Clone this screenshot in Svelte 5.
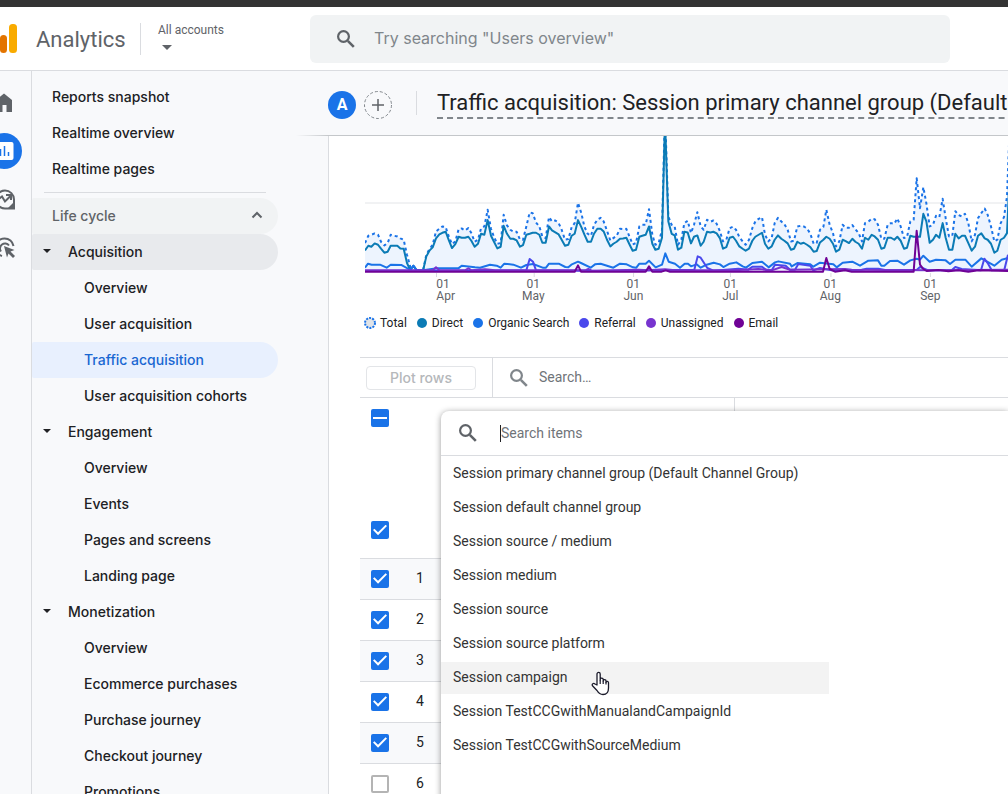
<script lang="ts">
  type Point = [number, number];
  type Series = { name: string; color: string; line: string };

  const topLinks = ['Reports snapshot', 'Realtime overview', 'Realtime pages'];

  const groups = [
    {
      name: 'Acquisition',
      items: ['Overview', 'User acquisition', 'Traffic acquisition', 'User acquisition cohorts'],
    },
    { name: 'Engagement', items: ['Overview', 'Events', 'Pages and screens', 'Landing page'] },
    {
      name: 'Monetization',
      items: ['Overview', 'Ecommerce purchases', 'Purchase journey', 'Checkout journey', 'Promotions'],
    },
  ];

  const dimensions = [
    'Session primary channel group (Default Channel Group)',
    'Session default channel group',
    'Session source / medium',
    'Session medium',
    'Session source',
    'Session source platform',
    'Session campaign',
    'Session TestCCGwithManualandCampaignId',
    'Session TestCCGwithSourceMedium',
  ];

  let active = $state('Traffic acquisition');
  let hovered = $state('Session campaign');
  let rows = $state([true, true, true, true, true, false]);
  let someRows = $state(true);
  let query = $state('');

  let shown = $derived(dimensions.filter((d) => d.toLowerCase().includes(query.toLowerCase())));

  // Plot units: one day is 9.68 wide, y grows downwards and 425 is zero
  const PLOT_WIDTH = 1929;
  const DAY = 9.68;

  const totalDaily = [
    340, 318, 315, 311, 315, 336, 347, 340, 315, 318, 320, 326, 330, 375, 412, 408, 422, 423, 423, 375,
    357, 345, 305, 297, 290, 292, 322, 343, 335, 298, 296, 302, 295, 310, 336, 330, 296, 290, 240, 297,
    322, 342, 340, 255, 287, 300, 306, 306, 330, 330, 290, 248, 250, 278, 290, 320, 325, 262, 275, 272,
    280, 300, 330, 328, 292, 280, 219, 250, 290, 312, 318, 285, 270, 264, 275, 303, 332, 325, 318, 297,
    298, 297, 322, 344, 340, 290, 285, 285, 238, 315, 345, 340, 300, -60, 260, 285, 290, 345, 330, 280,
    273, 310, 285, 247, 290, 300, 270, 276, 272, 282, 305, 335, 330, 295, 291, 300, 322, 335, 345, 330,
    295, 275, 267, 262, 315, 335, 325, 280, 264, 275, 283, 300, 335, 333, 290, 288, 290, 296, 312, 342,
    340, 300, 292, 240, 285, 310, 350, 335, 285, 294, 294, 286, 298, 310, 335, 280, 276, 267, 268, 285,
    327, 327, 285, 280, 282, 266, 290, 325, 322, 275, 270, 145, 235, 172, 220, 290, 285, 258, 262, 207,
    265, 320, 318, 244, 256, 260, 252, 280, 335, 315, 265, 250, 236, 255, 290, 335, 330, 280, 262, 200,
    -60,
  ];

  const directDaily = [
    362, 348, 351, 341, 345, 357, 369, 366, 348, 348, 348, 356, 357, 400, 422, 408, 422, 423, 423, 380,
    362, 353, 326, 314, 309, 306, 333, 355, 343, 321, 324, 324, 321, 333, 351, 342, 312, 315, 271, 318,
    336, 356, 351, 288, 312, 327, 327, 332, 351, 346, 315, 312, 309, 309, 315, 339, 339, 290, 302, 308,
    314, 330, 348, 345, 318, 312, 271, 292, 314, 336, 336, 312, 297, 297, 305, 330, 350, 342, 336, 327,
    326, 324, 345, 363, 360, 321, 318, 315, 290, 342, 360, 357, 324, -30, 275, 312, 317, 360, 354, 306,
    308, 341, 321, 317, 348, 336, 306, 308, 306, 311, 326, 357, 352, 324, 321, 333, 350, 357, 363, 357,
    333, 321, 315, 309, 342, 357, 350, 330, 317, 327, 333, 341, 360, 357, 336, 342, 339, 345, 352, 366,
    364, 338, 330, 321, 327, 342, 366, 360, 330, 334, 340, 327, 336, 342, 357, 324, 330, 315, 320, 330,
    357, 354, 324, 324, 330, 321, 333, 357, 354, 318, 321, 321, 321, 252, 275, 339, 330, 315, 324, 280,
    324, 360, 360, 312, 326, 318, 318, 340, 363, 351, 318, 311, 326, 330, 342, 369, 363, 330, 324, 310,
    90,
  ];

  const organic: Point[] = [
    [0, 414], [9, 402], [20, 405], [45, 405], [65, 414], [77, 405], [110, 406], [136, 421], [145, 408],
    [155, 421], [175, 422], [200, 418], [220, 416], [280, 416], [290, 408], [330, 413], [345, 414],
    [375, 405], [395, 408], [407, 414], [418, 402], [445, 405], [468, 414], [484, 406], [504, 403],
    [533, 414], [543, 414], [552, 402], [581, 402], [601, 412], [610, 413], [619, 405], [639, 396],
    [648, 400], [677, 414], [690, 404], [707, 402], [745, 414], [765, 402], [785, 404], [804, 413],
    [814, 414], [823, 402], [842, 402], [852, 393], [872, 413], [891, 405], [901, 371], [911, 396],
    [930, 402], [945, 414], [959, 402], [969, 402], [978, 410], [995, 404], [1007, 414], [1025, 405],
    [1046, 399], [1065, 404], [1075, 412], [1094, 402], [1114, 398], [1133, 410], [1143, 414],
    [1162, 400], [1191, 396], [1211, 413], [1230, 398], [1240, 395], [1275, 402], [1280, 410],
    [1297, 400], [1336, 404], [1345, 411], [1365, 399], [1405, 404], [1415, 413], [1433, 399],
    [1462, 396], [1485, 408], [1510, 393], [1539, 392], [1549, 408], [1558, 408], [1575, 394],
    [1597, 393], [1617, 405], [1636, 392], [1655, 387], [1665, 390], [1675, 378], [1694, 396],
    [1713, 390], [1742, 392], [1755, 403], [1771, 390], [1801, 390], [1820, 411], [1849, 386],
    [1888, 408], [1910, 390], [1929, 385],
  ];

  const referral: Point[] = [
    [0, 424], [484, 422], [494, 388], [504, 396], [513, 422], [700, 424], [988, 420], [998, 380],
    [1007, 384], [1027, 415], [1045, 423], [1120, 417], [1150, 420], [1162, 411], [1191, 411],
    [1205, 422], [1220, 422], [1230, 405], [1262, 408], [1275, 420], [1290, 420], [1300, 403],
    [1336, 408], [1345, 422], [1365, 415], [1400, 422], [1490, 420], [1505, 417], [1540, 417],
    [1560, 421], [1655, 421], [1665, 412], [1690, 422], [1760, 422], [1771, 412], [1790, 418],
    [1848, 422], [1858, 387], [1868, 400], [1880, 422], [1918, 420], [1929, 375],
  ];

  const unassigned: Point[] = [
    [0, 422], [203, 422], [213, 413], [223, 422], [300, 422], [310, 416], [320, 422], [360, 419],
    [390, 422], [660, 422], [670, 418], [680, 423], [820, 420], [850, 422], [900, 419], [930, 422],
    [1110, 422], [1180, 418], [1220, 422], [1250, 412], [1275, 420], [1440, 418], [1460, 420],
    [1700, 422], [1929, 420],
  ];

  const email: Point[] = [
    [0, 426], [629, 426], [639, 407], [648, 426], [842, 426], [852, 410], [862, 426], [890, 426],
    [902, 422], [915, 426], [1374, 426], [1384, 385], [1394, 418], [1410, 426], [1440, 422],
    [1460, 426], [1646, 426], [1655, 303], [1665, 405], [1675, 418], [1685, 424], [1720, 421],
    [1750, 425], [1780, 422], [1810, 426], [1840, 422], [1929, 424],
  ];

  const join = (points: Point[]) => points.map(([x, y]) => `${x},${y}`).join(' ');
  const daily = (values: number[]) => join(values.map((v, i) => [Math.round(i * DAY), v] as Point));

  const totalLine = daily(totalDaily);

  const series: Series[] = [
    { name: 'Direct', color: '#0b7bb5', line: daily(directDaily) },
    { name: 'Organic Search', color: '#1a73e8', line: join(organic) },
    { name: 'Referral', color: '#4a48ec', line: join(referral) },
    { name: 'Unassigned', color: '#7734cf', line: join(unassigned) },
    { name: 'Email', color: '#6f0296', line: join(email) },
  ];

  const months = [
    { name: 'Apr', x: 214 },
    { name: 'May', x: 505 },
    { name: 'Jun', x: 805 },
    { name: 'Jul', x: 1096 },
    { name: 'Aug', x: 1396 },
    { name: 'Sep', x: 1696 },
  ];
</script>

{#snippet magnifier()}
  <svg class="magnifier" viewBox="0 0 18 18" aria-hidden="true">
    <circle cx="6.500" cy="6.500" r="5.400" fill="none" stroke="currentColor" stroke-width="2.200" />
    <path d="M10.800 10.800l6 6" stroke="currentColor" stroke-width="2.600" />
  </svg>
{/snippet}

{#snippet caret()}
  <svg class="caret" viewBox="0 0 10 5" aria-hidden="true"><path d="M0 0h10L5 5z" fill="currentColor" /></svg>
{/snippet}

<div class="page">
  <div class="window-edge"></div>

  <header>
    <svg class="logo" viewBox="0 0 18 32" aria-hidden="true">
      <rect x="0" y="12" width="7" height="18" rx="3.5" fill="#e37400" />
      <rect x="9" y="1" width="8" height="29" rx="3.5" fill="#f9ab00" />
    </svg>
    <span class="product">Analytics</span>
    <button class="accounts">
      <span>All accounts</span>
      {@render caret()}
    </button>
    <label class="site-search">
      {@render magnifier()}
      <input type="text" placeholder={'Try searching "Users overview"'} aria-label="Search reports" />
    </label>
  </header>

  <div class="body">
    <nav class="rail" aria-label="Sections">
      <a href="#home" aria-label="Home">
        <svg viewBox="0 0 36 36"><path d="M10 27V15l8-6.500 8 6.500v12h-5.500v-7h-4v7z" fill="#5f6368" /></svg>
      </a>
      <a href="#reports" class="current" aria-label="Reports">
        <svg viewBox="0 0 36 36">
          <rect x="9" y="9" width="18.500" height="18" rx="2" fill="#fff" />
          <path d="M14.500 16v7M18.500 13v10M22.500 19v4" stroke="#1a73e8" stroke-width="1.500" />
        </svg>
      </a>
      <a href="#explore" aria-label="Explore">
        <svg viewBox="0 0 36 36" fill="none" stroke="#5f6368" stroke-width="2">
          <path d="M19 27.500a9 9 0 1 1 9-9v9z" />
          <path d="M12 18.500l4-3 3 5 6-6M20 14h5v5" />
          <path d="M28 21v7h-7z" fill="#5f6368" stroke="none" />
        </svg>
      </a>
      <a href="#advertising" aria-label="Advertising">
        <svg viewBox="0 0 36 36" fill="none" stroke="#5f6368" stroke-width="2">
          <path d="M16 27a9 9 0 1 1 11.500-10" />
          <path d="M15 22.500a5 5 0 1 1 8-6" />
          <path d="M18 17l10.500 4-4 1.500 4.500 4.500-2 2-4.500-4.500-1.500 4z" fill="#5f6368" stroke="none" />
        </svg>
      </a>
    </nav>

    <nav class="sidebar" aria-label="Reports">
      {#each topLinks as link}
        <a class="item" href="#top">{link}</a>
      {/each}
      <hr />
      <button class="item section">
        Life cycle
        <svg class="chevron" viewBox="0 0 12 8" fill="none" stroke="#5f6368" stroke-width="2">
          <path d="M1.500 6.500L6 2l4.500 4.500" />
        </svg>
      </button>
      {#each groups as group}
        <button class="item group" class:open={group.items.includes(active)}>
          {@render caret()}
          {group.name}
        </button>
        {#each group.items as item}
          <a class="item child" class:active={item === active} href="#report" onclick={() => (active = item)}>
            {item}
          </a>
        {/each}
      {/each}
    </nav>

    <main>
      <div class="title-bar">
        <span class="avatar">A</span>
        <button class="add" aria-label="Add comparison">
          <svg viewBox="0 0 28 28" fill="none">
            <circle cx="14" cy="14" r="13.500" stroke="#80868b" stroke-dasharray="3 2" />
            <path d="M14 8v12M8 14h12" stroke="#5f6368" stroke-width="1.500" />
          </svg>
        </button>
        <h1>Traffic acquisition: Session primary channel group (Default Channel Group)</h1>
      </div>

      <div class="report">
        <div class="chart">
          <svg class="plot" viewBox="0 18 {PLOT_WIDTH} 412" preserveAspectRatio="none" role="img" aria-label="Sessions over time">
            <polygon points="0,425 {totalLine} {PLOT_WIDTH},425" fill="#edf4fe" />
            <path class="grid" d="M0 219.500H1929" />
            <polyline points={totalLine} stroke="#1a73e8" stroke-dasharray="3 3" />
            {#each series as s}
              <polyline points={s.line} stroke={s.color} />
            {/each}
          </svg>
          <div class="axis">
            {#each months as month, i}
              <span class:first={i === 0} style="left: {(month.x / PLOT_WIDTH) * 100}%">01<br />{month.name}</span>
            {/each}
          </div>
          <ul class="legend">
            <li>
              <svg class="dot" viewBox="0 0 12 12"><circle cx="6" cy="6" r="5" fill="#e0e3e7" stroke="#1a73e8" stroke-width="2" stroke-dasharray="2 1.150" /></svg>
              Total
            </li>
            {#each series as s}
              <li>
                <svg class="dot small" viewBox="0 0 10 10"><circle cx="5" cy="5" r="5" fill={s.color} /></svg>
                {s.name}
              </li>
            {/each}
          </ul>
        </div>

        <div class="table-area">
          <div class="toolbar">
            <div class="plot-cell"><button class="plot-rows" disabled>Plot rows</button></div>
            <label class="table-search">
              {@render magnifier()}
              <input type="text" placeholder="Search…" aria-label="Search rows" />
            </label>
          </div>

          <table>
            <colgroup>
              <col class="check-col" />
              <col class="number-col" />
              <col class="dimension-col" />
              <col />
            </colgroup>
            <tbody>
              <tr class="head">
                <td><input type="checkbox" bind:indeterminate={someRows} aria-label="Select all rows" /></td>
                <td></td>
                <td class="dimension"></td>
                <td></td>
              </tr>
              <tr class="totals">
                <td><input type="checkbox" checked aria-label="Plot total" /></td>
                <td></td>
                <td class="dimension"></td>
                <td></td>
              </tr>
              {#each rows as _, i}
                <tr class="row">
                  <td><input type="checkbox" bind:checked={rows[i]} aria-label="Plot row {i + 1}" /></td>
                  <td class="number">{i + 1}</td>
                  <td class="dimension"></td>
                  <td></td>
                </tr>
              {/each}
            </tbody>
          </table>

          <div class="picker">
            <label class="picker-search">
              {@render magnifier()}
              <span class="text-cursor"></span>
              <input type="text" placeholder="Search items" aria-label="Search items" bind:value={query} />
            </label>
            <div class="options">
              {#each shown as name}
                <button class:hovered={name === hovered} onmouseenter={() => (hovered = name)}>
                  {name}
                  {#if name === hovered}
                    <svg class="hand" viewBox="0 0 19 25" aria-hidden="true">
                      <path d="M6 14V3a1.600 1.600 0 0 1 3.200 0v6.500V8.500a1.500 1.500 0 0 1 3 .200v1.300a1.400 1.400 0 0 1 2.800.200v1a1.300 1.300 0 0 1 2.500.500V17c0 4-1.500 6.500-5.500 6.500-3 0-4.500-1.500-6-4L1.500 14.800c-1-2 1-3 2.500-1.800z" fill="#fff" stroke="#1b1b2b" stroke-width="1.300" stroke-linejoin="round" />
                      <path d="M9.200 9.500v3.500M12.200 10v3M15 11v2.500" stroke="#1b1b2b" stroke-width="1.200" />
                    </svg>
                  {/if}
                </button>
              {/each}
            </div>
          </div>
        </div>
      </div>
    </main>
  </div>
</div>

<style>
  :global(body) {
    margin: 0;
    background: #f8f9fb;
  }

  .page {
    display: flex;
    flex-direction: column;
    height: 100vh;
    overflow: hidden;
    font-family: Roboto, 'Liberation Sans', sans-serif;
    font-size: 14px;
    color: #202124;
  }

  button,
  input {
    font: inherit;
    color: inherit;
    border: 0;
    padding: 0;
    background: none;
  }

  input[type='text'] {
    outline: none;
    min-width: 0;
    flex: 1;
  }

  input::placeholder {
    color: #6f7479;
    opacity: 1;
  }

  a {
    color: inherit;
    text-decoration: none;
  }

  .window-edge {
    height: 7px;
    background: #333;
    flex-shrink: 0;
  }

  .magnifier {
    width: 18px;
    height: 18px;
    color: #5f6368;
    flex-shrink: 0;
  }

  .caret {
    width: 10px;
    height: 5px;
  }

  header {
    display: flex;
    align-items: center;
    height: 63px;
    flex-shrink: 0;
    background: #fff;
    border-bottom: 1px solid #dadce0;
  }

  .logo {
    width: 18px;
    height: 32px;
  }

  .product {
    margin-left: 18px;
    padding-top: 2px;
    width: 104px;
    font-size: 22px;
    color: #5f6368;
  }

  .accounts {
    display: flex;
    flex-direction: column;
    gap: 8px;
    height: 32px;
    width: 170px;
    padding-left: 17px;
    border-left: 1px solid #dadce0;
    font-size: 12px;
    line-height: 14px;
    text-align: left;
    color: #5f6368;
  }

  .accounts .caret {
    margin-left: 4px;
    flex-shrink: 0;
  }

  .site-search {
    display: flex;
    align-items: center;
    gap: 19px;
    flex: 1;
    height: 48px;
    margin-right: 58px;
    padding: 0 27px;
    box-sizing: border-box;
    background: #f1f3f4;
    border-radius: 6px;
    font-family: Inter, 'Liberation Sans', sans-serif;
    font-size: 16px;
  }

  .site-search input {
    padding-bottom: 2px;
  }

  .site-search input::placeholder {
    color: #80868b;
  }

  .body {
    display: flex;
    flex: 1;
    min-height: 0;
  }

  .rail {
    display: flex;
    flex-direction: column;
    gap: 12px;
    width: 31px;
    flex-shrink: 0;
    padding-top: 14px;
    border-right: 1px solid #dadce0;
  }

  .rail a {
    width: 36px;
    height: 36px;
    margin-left: -14px;
    border-radius: 50%;
  }

  .rail .current {
    background: #1a73e8;
  }

  .rail svg {
    display: block;
  }

  .sidebar {
    display: flex;
    flex-direction: column;
    width: 246px;
    flex-shrink: 0;
    padding: 8px 50px 0 0;
    font-family: Inter, 'Liberation Sans', sans-serif;
    font-weight: 500;
  }

  .item {
    display: flex;
    align-items: center;
    height: 36px;
    flex-shrink: 0;
    box-sizing: border-box;
    padding: 0 0 2px 20px;
    border-radius: 2px 18px 18px 2px;
    text-align: left;
  }

  .sidebar hr {
    width: 222px;
    margin: 5px 12px;
    border: 0;
    border-top: 1px solid #dadce0;
    box-sizing: border-box;
  }

  .section {
    justify-content: space-between;
    padding-right: 15px;
    background: #f1f3f4;
    color: #5f6368;
  }

  .chevron {
    width: 12px;
    height: 8px;
  }

  .group {
    gap: 17px;
    padding-left: 11px;
  }

  .group .caret {
    width: 8px;
    height: 4px;
  }

  .open {
    background: #e8eaed;
  }

  .child {
    padding-left: 52px;
  }

  .active {
    background: #e8f0fe;
    color: #1967d2;
  }

  main {
    flex: 1;
    min-width: 0;
    display: flex;
    flex-direction: column;
  }

  .title-bar {
    position: relative;
    display: flex;
    align-items: center;
    height: 64px;
    flex-shrink: 0;
    border-bottom: 1px solid #c4c7ca;
  }

  .title-bar::before {
    content: '';
    position: absolute;
    right: 100%;
    top: 100%;
    width: 32px;
    height: 1px;
    background: linear-gradient(to left, #c4c7ca, transparent);
  }

  .avatar {
    width: 28px;
    flex-shrink: 0;
    margin-top: 4px;
    border-radius: 50%;
    background: #1a73e8;
    color: #fff;
    font-size: 16px;
    font-weight: 700;
    line-height: 28px;
    text-align: center;
  }

  .add {
    width: 28px;
    height: 28px;
    flex-shrink: 0;
    margin: 4px 24px 0 8px;
  }

  .add svg {
    display: block;
  }

  h1 {
    position: relative;
    flex-shrink: 0;
    margin: 0 0 0 21px;
    padding-top: 1px;
    border-bottom: 2px dashed #80868b;
    font-size: 22px;
    font-weight: 400;
    line-height: 28px;
    white-space: nowrap;
  }

  h1::before {
    content: '';
    position: absolute;
    left: -21px;
    top: 3px;
    width: 1px;
    height: 24px;
    background: #dadce0;
  }

  .report {
    flex: 1;
    background: #fff;
    border-left: 1px solid #dadce0;
  }

  .chart {
    padding-left: 36px;
  }

  .plot {
    display: block;
    width: 100%;
    height: 137px;
  }

  .plot polyline {
    fill: none;
    stroke-width: 2;
    stroke-linejoin: round;
    vector-effect: non-scaling-stroke;
  }

  .grid {
    stroke: #e3e5e8;
    vector-effect: non-scaling-stroke;
  }

  .axis {
    position: relative;
    height: 30px;
    font-size: 12px;
    line-height: 12px;
    color: #5f6368;
  }

  .axis span {
    position: absolute;
    padding-top: 5px;
    text-align: center;
    transform: translateX(-50%);
  }

  .axis .first {
    text-align: left;
    transform: none;
  }

  .axis span::before {
    content: '';
    position: absolute;
    left: 50%;
    top: 0;
    width: 1px;
    height: 4px;
    background: #dadce0;
  }

  .axis .first::before {
    left: 0;
  }

  .legend {
    display: flex;
    gap: 10px;
    margin: 0 0 0 -1px;
    padding: 12px 0 26px;
    list-style: none;
    font-size: 12px;
    line-height: 16px;
  }

  .legend li {
    display: flex;
    align-items: center;
    gap: 4px;
  }

  .dot {
    width: 12px;
    height: 12px;
  }

  .small {
    width: 10px;
    height: 10px;
    margin-right: 1px;
  }

  .table-area {
    position: relative;
    margin-left: 31px;
    border-top: 1px solid #dadce0;
  }

  .toolbar {
    display: flex;
    height: 39px;
    border-bottom: 1px solid #dadce0;
  }

  .plot-cell {
    display: flex;
    align-items: center;
    width: 126px;
    padding-left: 6px;
    border-right: 1px solid #dadce0;
  }

  .plot-rows {
    width: 110px;
    height: 24px;
    border: 1px solid #e3e5e8;
    border-radius: 4px;
    font-family: Inter, 'Liberation Sans', sans-serif;
    font-weight: 500;
    color: #b5b8bb;
  }

  .table-search {
    display: flex;
    align-items: center;
    gap: 11px;
    flex: 1;
    padding-left: 17px;
  }

  .table-search .magnifier {
    color: #80868b;
  }

  .table-search input {
    padding-bottom: 2px;
  }

  table {
    width: 100%;
    table-layout: fixed;
    border-collapse: collapse;
  }

  .check-col,
  .number-col {
    width: 40px;
  }

  .dimension-col {
    width: 294px;
  }

  td {
    padding: 0;
    border-bottom: 1px solid #dadce0;
  }

  .head td,
  .totals td {
    height: 112px;
    padding-top: 11px;
    box-sizing: border-box;
    vertical-align: top;
  }

  .head td {
    border-bottom: 0;
  }

  .totals td {
    height: 48px;
  }

  .dimension {
    border-right: 1px solid #dadce0;
  }

  .row td {
    height: 40px;
  }

  .row .number {
    height: 38px;
    padding-bottom: 2px;
    text-align: center;
  }

  .row:nth-child(odd) {
    background: #f8f9fb;
  }

  input[type='checkbox'] {
    display: block;
    appearance: none;
    width: 18px;
    height: 18px;
    margin: 0 0 0 11px;
    border: 2px solid #b4b4b4;
    border-radius: 2px;
    background: #fff;
  }

  input[type='checkbox']:checked,
  input[type='checkbox']:indeterminate {
    display: grid;
    place-items: center;
    border: 0;
    background: #1a73e8;
  }

  input[type='checkbox']:checked::before {
    content: '';
    width: 14px;
    height: 11px;
    background: #fff;
    clip-path: polygon(0 50%, 10% 38%, 36% 70%, 90% 2%, 100% 14%, 36% 98%);
  }

  input[type='checkbox']:indeterminate::before {
    content: '';
    width: 14px;
    height: 2px;
    background: #fff;
  }

  /* Open dimension menu, on top of the table */
  .picker {
    position: absolute;
    left: 81px;
    top: 53px;
    right: 0;
    height: 100vh;
    background: #fff;
    border-radius: 8px 0 0 0;
    box-shadow: 0 1px 6px rgba(0, 0, 0, 0.4);
  }

  .picker-search {
    display: flex;
    align-items: center;
    height: 44px;
    padding-left: 18px;
    border-bottom: 1px solid #dadce0;
  }

  .text-cursor {
    width: 1px;
    height: 17px;
    margin-left: 23px;
    background: #202124;
  }

  .options {
    display: flex;
    flex-direction: column;
    gap: 2px;
    width: 388px;
    padding-top: 2px;
    color: #333;
  }

  .options button {
    position: relative;
    height: 32px;
    padding: 0 0 2px 12px;
    text-align: left;
  }

  .options .hovered {
    background: #f3f3f3;
  }

  .hand {
    position: absolute;
    left: 150px;
    top: 9px;
    width: 19px;
    height: 25px;
  }
</style>
